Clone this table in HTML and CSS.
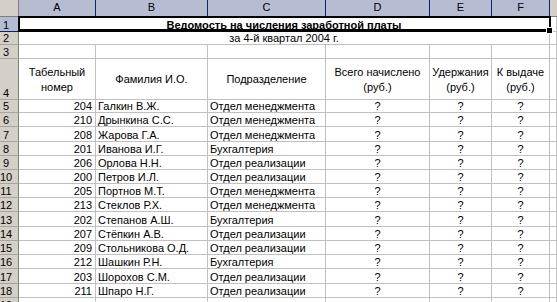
FILE: index.html
```html
<!DOCTYPE html>
<html lang="ru">
<head>
<meta charset="utf-8">
<title>Ведомость</title>
<link rel="stylesheet" href="styles.css">
</head>
<body>
<div class="sheet">
  <div class="corner"></div>
  <div class="colhead sel">A</div>
  <div class="colhead sel">B</div>
  <div class="colhead sel">C</div>
  <div class="colhead sel">D</div>
  <div class="colhead sel">E</div>
  <div class="colhead sel last">F</div>
  <div class="colhead rest"></div>

  <div class="rowhead selrow">1</div>
  <div class="title"><span class="title-text">Ведомость на числения заработной платы</span><span class="selection"><span class="handle"></span></span></div>
  <div class="cell"></div>

  <div class="rowhead">2</div>
  <div class="subtitle">за 4-й квартал 2004 г.</div>
  <div class="cell"></div>

  <div class="rowhead">3</div>
  <div class="cell"></div><div class="cell"></div><div class="cell"></div><div class="cell"></div><div class="cell"></div><div class="cell"></div><div class="cell"></div>

  <div class="rowhead">4</div>
  <div class="cell head">Табельный<br>номер</div>
  <div class="cell head">Фамилия И.О.</div>
  <div class="cell head">Подразделение</div>
  <div class="cell head">Всего начислено<br>(руб.)</div>
  <div class="cell head">Удержания<br>(руб.)</div>
  <div class="cell head">К выдаче<br>(руб.)</div>
  <div class="cell"></div>

  <div class="rowhead">5</div><div class="cell num">204</div><div class="cell">Галкин В.Ж.</div><div class="cell">Отдел менеджмента</div><div class="cell mid">?</div><div class="cell mid">?</div><div class="cell mid">?</div><div class="cell"></div>
  <div class="rowhead">6</div><div class="cell num">210</div><div class="cell">Дрынкина С.С.</div><div class="cell">Отдел менеджмента</div><div class="cell mid">?</div><div class="cell mid">?</div><div class="cell mid">?</div><div class="cell"></div>
  <div class="rowhead">7</div><div class="cell num">208</div><div class="cell">Жарова Г.А.</div><div class="cell">Отдел менеджмента</div><div class="cell mid">?</div><div class="cell mid">?</div><div class="cell mid">?</div><div class="cell"></div>
  <div class="rowhead">8</div><div class="cell num">201</div><div class="cell">Иванова И.Г.</div><div class="cell">Бухгалтерия</div><div class="cell mid">?</div><div class="cell mid">?</div><div class="cell mid">?</div><div class="cell"></div>
  <div class="rowhead">9</div><div class="cell num">206</div><div class="cell">Орлова Н.Н.</div><div class="cell">Отдел реализации</div><div class="cell mid">?</div><div class="cell mid">?</div><div class="cell mid">?</div><div class="cell"></div>
  <div class="rowhead">10</div><div class="cell num">200</div><div class="cell">Петров И.Л.</div><div class="cell">Отдел реализации</div><div class="cell mid">?</div><div class="cell mid">?</div><div class="cell mid">?</div><div class="cell"></div>
  <div class="rowhead">11</div><div class="cell num">205</div><div class="cell">Портнов М.Т.</div><div class="cell">Отдел менеджмента</div><div class="cell mid">?</div><div class="cell mid">?</div><div class="cell mid">?</div><div class="cell"></div>
  <div class="rowhead">12</div><div class="cell num">213</div><div class="cell">Стеклов Р.Х.</div><div class="cell">Отдел менеджмента</div><div class="cell mid">?</div><div class="cell mid">?</div><div class="cell mid">?</div><div class="cell"></div>
  <div class="rowhead">13</div><div class="cell num">202</div><div class="cell">Степанов А.Ш.</div><div class="cell">Бухгалтерия</div><div class="cell mid">?</div><div class="cell mid">?</div><div class="cell mid">?</div><div class="cell"></div>
  <div class="rowhead">14</div><div class="cell num">207</div><div class="cell">Стёпкин А.В.</div><div class="cell">Отдел реализации</div><div class="cell mid">?</div><div class="cell mid">?</div><div class="cell mid">?</div><div class="cell"></div>
  <div class="rowhead">15</div><div class="cell num">209</div><div class="cell">Стольникова О.Д.</div><div class="cell">Отдел реализации</div><div class="cell mid">?</div><div class="cell mid">?</div><div class="cell mid">?</div><div class="cell"></div>
  <div class="rowhead">16</div><div class="cell num">212</div><div class="cell">Шашкин Р.Н.</div><div class="cell">Бухгалтерия</div><div class="cell mid">?</div><div class="cell mid">?</div><div class="cell mid">?</div><div class="cell"></div>
  <div class="rowhead">17</div><div class="cell num">203</div><div class="cell">Шорохов С.М.</div><div class="cell">Отдел реализации</div><div class="cell mid">?</div><div class="cell mid">?</div><div class="cell mid">?</div><div class="cell"></div>
  <div class="rowhead">18</div><div class="cell num">211</div><div class="cell">Шпаро Н.Г.</div><div class="cell">Отдел реализации</div><div class="cell mid">?</div><div class="cell mid">?</div><div class="cell mid">?</div><div class="cell"></div>
  <div class="rowhead">19</div><div class="cell"></div><div class="cell"></div><div class="cell"></div><div class="cell"></div><div class="cell"></div><div class="cell"></div><div class="cell"></div>
</div>
</body>
</html>
```

FILE: styles.css
```css
html, body {
  margin: 0;
  padding: 0;
  background: #ffffff;
  overflow: hidden;
}

.sheet {
  display: grid;
  grid-template-columns: 19px 77px 112px 118px 104px 62px 58px 7px;
  grid-template-rows: 17px 15px 13px 14px 41px 13px 14px 15px 14px 14px 14px 14px 14px 15px 14px 14px 14px 15px 14px 14px;
  width: 557px;
  height: 302px;
  overflow: hidden;
  font-family: "Liberation Sans", Arial, sans-serif;
  font-size: 11px;
  color: #000;
}

.sheet > div {
  box-sizing: border-box;
  min-width: 0;
  overflow: hidden;
  white-space: nowrap;
}

.corner {
  background: #d4d0c8;
  border-right: 1px solid #808080;
  border-bottom: 1px solid #808080;
}

.colhead {
  background: #d4d0c8;
  border-bottom: 1px solid #808080;
  border-right: 1px solid #808080;
  text-align: center;
  line-height: 15px;
}

.colhead.sel {
  background: #b6bdd2;
  border-right-color: #0a246a;
  border-bottom-color: #0a246a;
}

.colhead.rest {
  border-right: none;
}

.rowhead {
  background: #d4d0c8;
  border-right: 1px solid #808080;
  border-bottom: 1px solid #a8a59e;
  padding-right: 6px;
  text-align: center;
  display: flex;
  align-items: flex-end;
  justify-content: center;
  line-height: 12px;
  padding-bottom: 0;
}

.rowhead.selrow {
  background: #b6bdd2;
  border-right-color: #0a246a;
  border-bottom-color: #0a246a;
}

.cell {
  border-right: 1px solid #c0c0c0;
  border-bottom: 1px solid #c0c0c0;
  display: flex;
  align-items: flex-end;
  line-height: 12px;
  padding: 0 2px 0 2px;
}

.cell.num {
  justify-content: flex-end;
  padding-right: 3px;
}

.cell.mid {
  justify-content: center;
}

.cell.head {
  align-items: center;
  justify-content: center;
  text-align: center;
  line-height: 15px;
  padding-top: 1px;
}

.title {
  grid-column: 2 / span 6;
  position: relative;
  display: flex;
  align-items: center;
  justify-content: center;
  font-weight: bold;
  text-decoration: underline;
  overflow: visible !important;
  border-bottom: 1px solid #c0c0c0;
  border-right: 1px solid #c0c0c0;
}

.title-text {
  padding-top: 1px;
}

.selection {
  position: absolute;
  left: -1px;
  top: -1px;
  right: -2px;
  bottom: -1px;
  border: 2px solid #000;
  border-bottom-width: 3px;
}

.handle {
  position: absolute;
  right: -4px;
  bottom: -5px;
  width: 5px;
  height: 5px;
  background: #000;
  border: 1px solid #fff;
}

.subtitle {
  grid-column: 2 / span 6;
  display: flex;
  align-items: flex-end;
  justify-content: center;
  line-height: 12px;
  border-right: 1px solid #c0c0c0;
  border-bottom: 1px solid #c0c0c0;
}
```
